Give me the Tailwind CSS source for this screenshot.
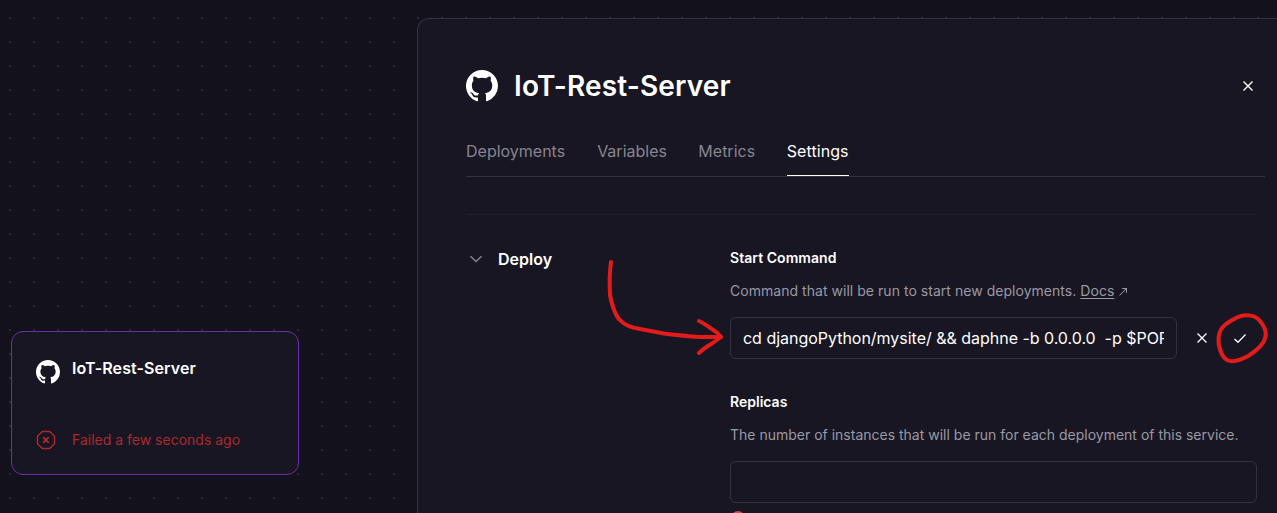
<!DOCTYPE html>
<html lang="en">
<head>
<meta charset="utf-8">
<title>IoT-Rest-Server</title>
<script src="https://cdn.jsdelivr.net/npm/@tailwindcss/browser@4"></script>
</head>
<body class="relative h-[513px] w-[1277px] overflow-hidden bg-[#13111c] font-[Inter,sans-serif] text-white">
<svg class="hidden">
  <symbol id="github" viewBox="0 0 16 16"><path fill="currentColor" d="M8 0C3.58 0 0 3.58 0 8c0 3.54 2.29 6.53 5.47 7.59.4.07.55-.17.55-.38 0-.19-.01-.82-.01-1.49-2.01.37-2.53-.49-2.69-.94-.09-.23-.48-.94-.82-1.13-.28-.15-.68-.52-.01-.53.63-.01 1.08.58 1.23.82.72 1.21 1.87.87 2.33.66.07-.52.28-.87.51-1.07-1.78-.2-3.64-.89-3.64-3.95 0-.87.31-1.59.82-2.15-.08-.2-.36-1.02.08-2.12 0 0 .67-.21 2.2.82.64-.18 1.32-.27 2-.27s1.36.09 2 .27c1.53-1.04 2.2-.82 2.2-.82.44 1.1.16 1.92.08 2.12.51.56.82 1.27.82 2.15 0 3.07-1.87 3.75-3.65 3.95.29.25.54.73.54 1.48 0 1.07-.01 1.93-.01 2.2 0 .21.15.46.55.38A8.01 8.01 0 0 0 16 8c0-4.42-3.58-8-8-8z"/></symbol>
</svg>

<!-- canvas grid -->
<svg class="absolute inset-0 size-full">
  <defs><pattern id="dots" x="9" y="17" width="24" height="24" patternUnits="userSpaceOnUse"><rect width="2" height="2" fill="#2d2b38"/></pattern></defs>
  <rect width="1277" height="513" fill="url(#dots)"/>
</svg>

<!-- service node -->
<article class="absolute left-[11px] top-[331px] flex h-36 w-72 flex-col justify-between rounded-xl border border-[#6b2fa8] bg-[#181622] px-6 pt-6 pb-[22px]">
  <div class="flex gap-3">
    <svg class="mt-1 size-6"><use href="#github"/></svg>
    <h2 class="text-base font-semibold leading-6 tracking-[0.08px]">IoT-Rest-Server</h2>
  </div>
  <div class="flex items-center gap-4 text-[#a92a2f]">
    <svg class="size-5" viewBox="0 0 20 20" fill="none" stroke="currentColor" stroke-width="1.5"><path d="M6.300 1.500h7.400l4.800 4.800v7.400l-4.800 4.800H6.300l-4.800-4.800V6.300z"/><path stroke-width="1.800" d="M7.200 7.200l5.600 5.600M12.800 7.200l-5.600 5.600"/></svg>
    <p class="text-sm leading-6">Failed a few seconds ago</p>
  </div>
</article>

<!-- details panel -->
<main class="absolute left-[417px] top-[18px] h-[495px] w-[860px] overflow-hidden rounded-tl-xl border-t border-l border-[#33323e] bg-[#181622] pl-12">
  <header class="mt-[47px] flex h-10 w-[799px] items-center gap-4">
    <svg class="size-8"><use href="#github"/></svg>
    <h1 class="grow text-[28px] font-semibold leading-10 tracking-[0.14px]">IoT-Rest-Server</h1>
    <svg class="mr-3 size-[10px]" viewBox="0 0 10 10" fill="none" stroke="currentColor" stroke-width="1.4"><path d="M.5.5l9 9M9.500.5l-9 9"/></svg>
  </header>
  <nav class="mt-[33px] flex h-[38px] w-[799px] gap-8 border-b border-[#33323e] text-base leading-6 text-[#868590]">
    <a>Deployments</a><a class="-mr-[0.6px]">Variables</a><a class="-mr-[0.4px]">Metrics</a><a class="border-b border-white tracking-[0.08px] text-white">Settings</a>
  </nav>
  <section class="mt-[37px] flex w-[791px] border-t border-[#211f2d] pt-[31px]">
    <div class="flex w-[264px] items-start pt-px">
      <svg class="mt-[8px] ml-1 mr-4 h-2 w-3" viewBox="0 0 12 8" fill="none" stroke="#868590" stroke-width="1.4"><path d="M.5 1.200L6 6.600l5.500-5.400"/></svg>
      <h2 class="text-base font-semibold leading-6">Deploy</h2>
    </div>
    <div class="w-[527px] text-sm">
      <h3 class="font-semibold leading-6 tracking-[0.05px]">Start Command</h3>
      <p class="mt-[9px] flex leading-6 text-[#9a99a5]"><span class="tracking-[0.036px]">Command that will be run to start new deployments. <a class="underline underline-offset-2">Docs</a></span>
        <svg class="mt-[9px] ml-[5px] size-2" viewBox="0 0 8 8" fill="none" stroke="currentColor"><path d="M.5 7.500L7.500.5M3.200.5h4.300v4.300"/></svg></p>
      <div class="mt-[14px] flex items-center">
        <div class="h-[42px] w-[447px] rounded-md border border-[#33323e] px-3 text-base leading-10 tracking-[-0.02px]"><div class="overflow-hidden whitespace-pre">cd djangoPython/mysite/ &amp;&amp; daphne -b 0.0.0.0  -p $PORT</div></div>
        <svg class="ml-5 size-[10px]" viewBox="0 0 10 10" fill="none" stroke="currentColor" stroke-width="1.3"><path d="M.5.5l9 9M9.500.5l-9 9"/></svg>
        <svg class="ml-[27px] h-[9px] w-3" viewBox="0 0 12 9" fill="none" stroke="currentColor" stroke-width="1.3"><path d="M.5 5l3.500 3.300L11.500.5"/></svg>
      </div>
      <h3 class="mt-[31px] font-semibold leading-6">Replicas</h3>
      <p class="mt-[9px] whitespace-nowrap leading-6 text-[#9a99a5]">The number of instances that will be run for each deployment of this service.</p>
      <div class="mt-[14px] h-[42px] rounded-md border border-[#33323e]"></div>
      <div class="mt-2 ml-[1px] size-[14px] rounded-full border-2 border-[#d84a4d]"></div>
    </div>
  </section>
</main>

<!-- hand-drawn annotations -->
<svg class="absolute inset-0 size-full" viewBox="0 0 1277 513" fill="none" stroke="#e31b1b" stroke-width="4" stroke-linecap="round" stroke-linejoin="round">
  <path d="M611 262C609 275 609.500 285 610 295C612 305 616 317 621 321C625 325.500 631 327.500 640 329L664 333.500C680 335.500 692 336.500 700 337H721"/>
  <path d="M699 321C706 324 711 329 717 332.500L721 337L712 343.500C708 346 703 349 699 353"/>
  <path d="M1226 324C1232 320 1238 316 1243 315.500C1251 314.500 1257 317 1260 321C1265 327 1266.500 332 1265.500 337C1264 344 1256 351 1249 355.500C1241 360 1232 362.500 1227 360C1221 356 1218 346 1218.500 338C1219 331 1222 327 1226 324Z"/>
</svg>
</body>
</html>
